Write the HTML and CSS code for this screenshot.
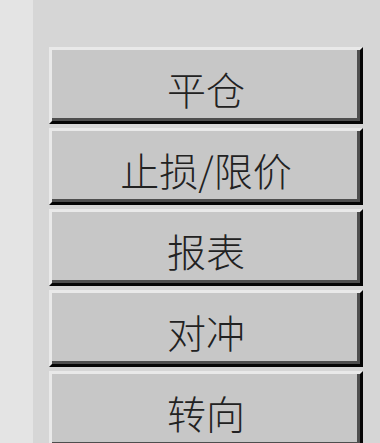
FILE: index.html
```html
<!DOCTYPE html>
<html lang="zh-CN">
<head>
<meta charset="utf-8">
<link rel="stylesheet" href="styles.css">
</head>
<body>
<div class="app">
  <div class="strip"></div>
  <div class="panel">
    <button class="btn">平仓</button>
    <button class="btn">止损/限价</button>
    <button class="btn">报表</button>
    <button class="btn">对冲</button>
    <button class="btn">转向</button>
  </div>
</div>
</body>
</html>
```
FILE: styles.css
```css
html, body {
  margin: 0;
  padding: 0;
  width: 380px;
  height: 443px;
  overflow: hidden;
  background: #d6d6d6;
}
.app {
  display: flex;
  height: 443px;
}
.strip {
  width: 33px;
  flex: none;
  background: #e4e4e4;
}
.panel {
  flex: 1;
  display: flex;
  flex-direction: column;
  gap: 4px;
  padding: 47px 17px 0 16px;
  background: #d6d6d6;
}
.btn {
  flex: none;
  height: 77px;
  box-sizing: border-box;
  margin: 0;
  padding: 6px 0 0 0;
  background: #c7c7c7;
  border-style: solid;
  border-width: 3px;
  border-color: #e9e9e9 #050505 #050505 #e9e9e9;
  box-shadow: inset -3px -3px 0 #4e4e4e;
  color: #222222;
  font-family: "Noto Sans CJK SC", "Noto Sans", sans-serif;
  font-size: 39px;
  font-weight: 300;
  line-height: 1;
  text-align: center;
}
```
